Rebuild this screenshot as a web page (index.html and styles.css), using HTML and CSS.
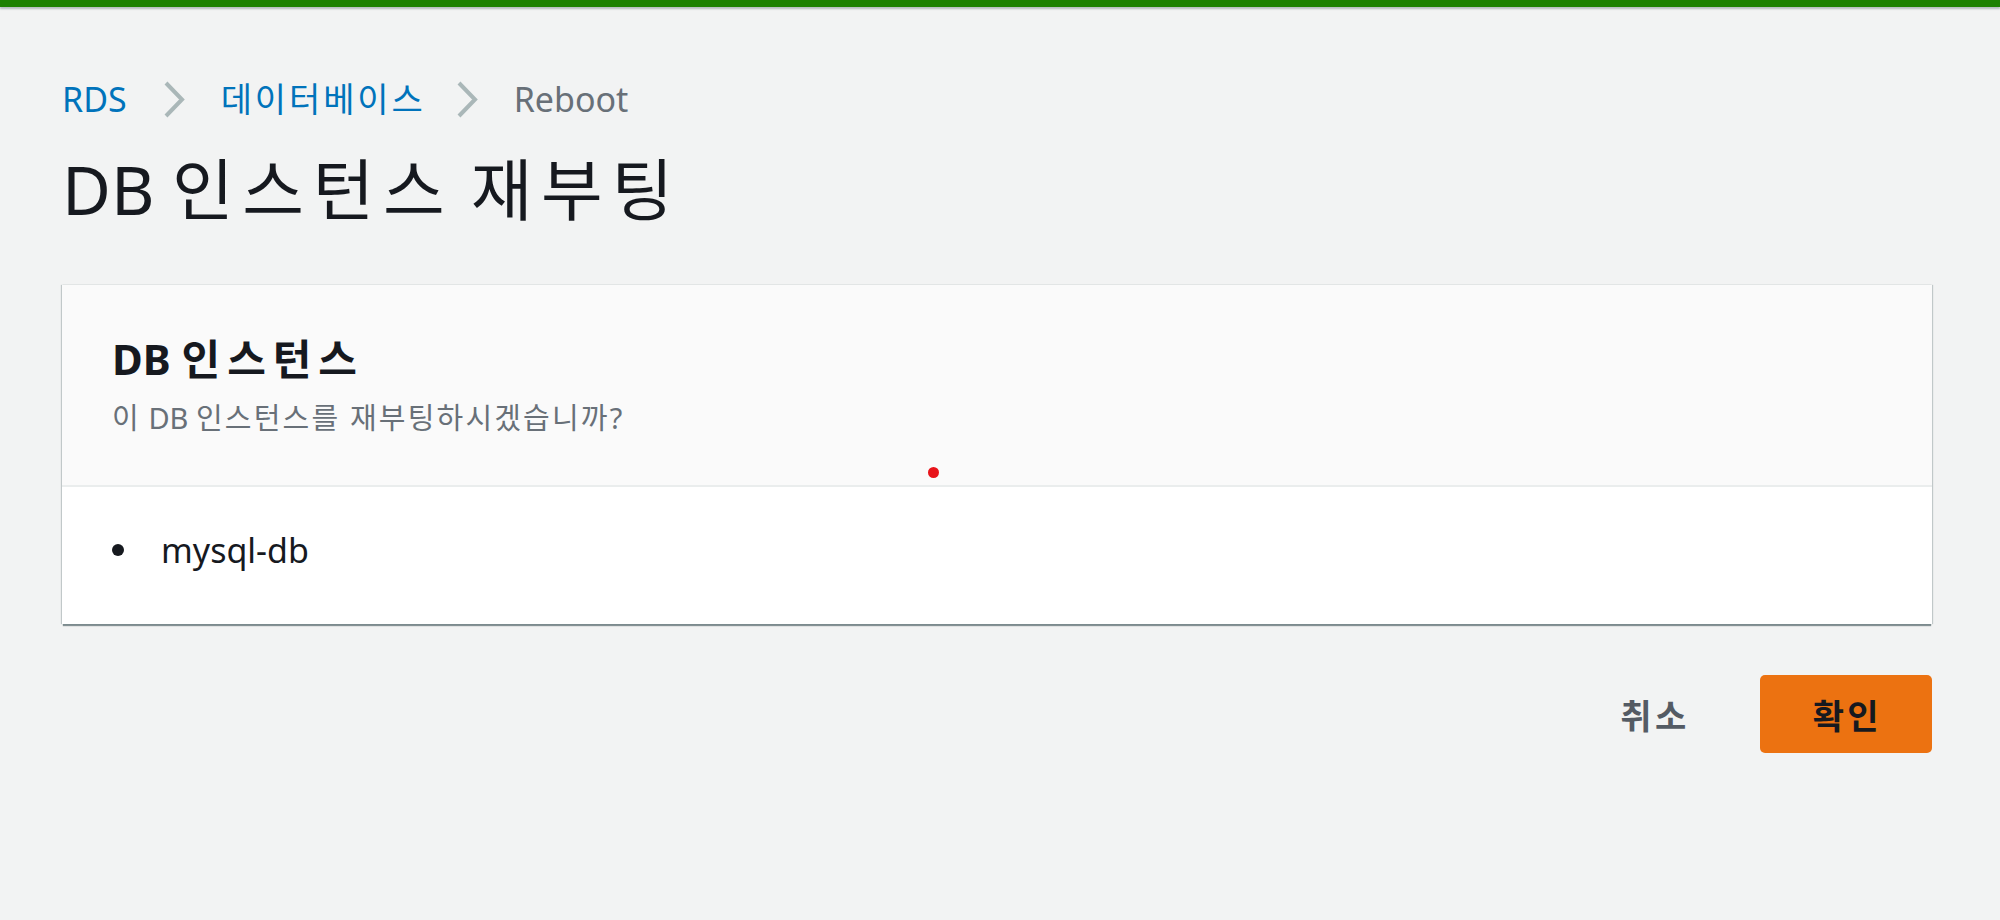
FILE: index.html
```html
<!DOCTYPE html>
<html lang="ko">
<head>
<meta charset="utf-8">
<title>DB 인스턴스 재부팅</title>
<link rel="stylesheet" href="styles.css">
</head>
<body>
<div class="topbar"></div>
<main class="main">
  <nav class="breadcrumb">
    <a class="crumb-link" href="#">RDS</a>
    <svg class="chev" width="22" height="37" viewBox="0 0 22 37"><polyline points="3,2 19,18.5 3,35" fill="none" stroke="#aab7b8" stroke-width="4"/></svg>
    <a class="crumb-link ko" href="#">데이터베이스</a>
    <svg class="chev" width="22" height="37" viewBox="0 0 22 37"><polyline points="3,2 19,18.5 3,35" fill="none" stroke="#aab7b8" stroke-width="4"/></svg>
    <span class="crumb-current">Reboot</span>
  </nav>
  <h1 class="page-title">DB <span class="ko">인스턴스</span> <span class="ko">재부팅</span></h1>
  <section class="card">
    <header class="card-header">
      <h2 class="card-title">DB <span class="ko">인스턴스</span></h2>
      <p class="card-desc"><span class="ko">이</span> DB <span class="ko">인스턴스를 재부팅하시겠습니까</span>?</p>
    </header>
    <div class="card-body">
      <ul class="items">
        <li class="item">mysql-db</li>
      </ul>
    </div>
    <span class="red-dot"></span>
  </section>
  <div class="actions">
    <button class="btn btn-link ko">취소</button>
    <button class="btn btn-primary ko">확인</button>
  </div>
</main>
</body>
</html>
```
FILE: styles.css
```css
html, body {
  margin: 0;
  padding: 0;
}
body {
  background: #f2f3f3;
  font-family: "Noto Sans", "Noto Sans CJK KR", sans-serif;
  color: #16191f;
  width: 2000px;
  height: 920px;
  overflow: hidden;
}
.ko {
  letter-spacing: 0.085em;
}
.topbar {
  height: 7px;
  background: #1d8102;
  box-shadow: 0 2px 2px rgba(0, 28, 36, 0.25);
}
.main {
  padding: 0 68px 0 62px;
}
.breadcrumb {
  margin-top: 68px;
  display: flex;
  align-items: center;
  gap: 36px;
  font-size: 34px;
  line-height: 48px;
  height: 48px;
}
.crumb-link {
  color: #0073bb;
  text-decoration: none;
}
.crumb-link.ko {
  margin-right: -6px;
}
.crumb-current {
  color: #687078;
}
.chev {
  display: block;
}
.page-title {
  margin: 26px 0 0;
  font-size: 67px;
  line-height: 80px;
  font-weight: 400;
  color: #16191f;
}
.page-title .ko {
  letter-spacing: 0.13em;
}
.card {
  position: relative;
  margin-top: 56px;
  background: #ffffff;
  box-shadow: 0 3px 1px -1px rgba(0, 28, 36, 0.45), 1px 0 1px 0 rgba(0, 28, 36, 0.2), -1px 0 1px 0 rgba(0, 28, 36, 0.2);
}
.card-header {
  background: #fafafa;
  padding: 48px 50px 47px;
  border-bottom: 2px solid #eaeded;
}
.card-title {
  margin: 0;
  font-size: 42px;
  line-height: 52px;
  font-weight: 700;
  color: #16191f;
}
.card-title .ko {
  letter-spacing: 0.165em;
}
.card-desc {
  margin: 13px 0 0;
  font-size: 29px;
  line-height: 40px;
  color: #687078;
}
.card-desc .ko {
  letter-spacing: 0.075em;
}
.card-body {
  padding: 39px 0 50px;
}
.items {
  list-style: none;
  margin: 0;
  padding: 0 0 0 50px;
}
.item {
  display: flex;
  align-items: center;
  gap: 37px;
  font-size: 34px;
  line-height: 48px;
  color: #16191f;
}
.item::before {
  content: "";
  width: 12px;
  height: 12px;
  border-radius: 50%;
  background: #16191f;
  flex: none;
}
.red-dot {
  position: absolute;
  left: 866px;
  top: 182px;
  width: 11px;
  height: 11px;
  border-radius: 50%;
  background: #e8141a;
}
.actions {
  margin-top: 51px;
  display: flex;
  justify-content: flex-end;
  gap: 20px;
}
.btn {
  height: 78px;
  padding: 0 50px 0 53px;
  border: none;
  font-family: "Noto Sans", "Noto Sans CJK KR", sans-serif;
  font-size: 34px;
  font-weight: 600;
  letter-spacing: 0.1em;
  cursor: pointer;
}
.btn-link {
  background: transparent;
  color: #545b64;
}
.btn-primary {
  background: #ec7211;
  color: #16191f;
  border-radius: 5px;
}
```
